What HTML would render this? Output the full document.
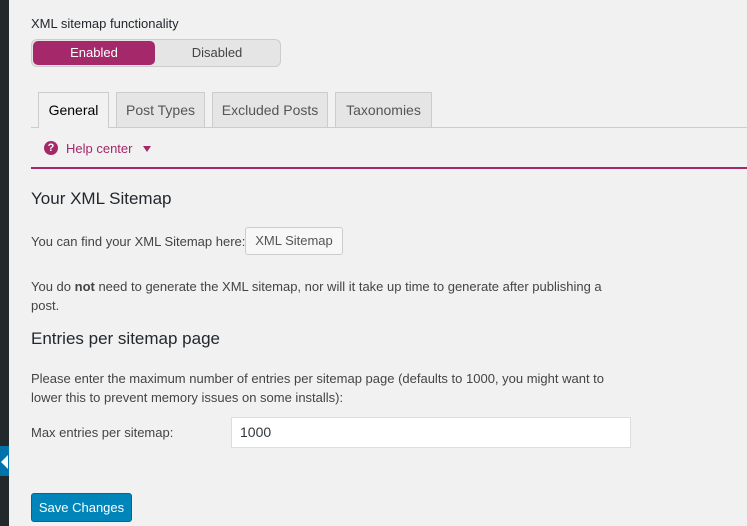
<!DOCTYPE html><html><head><style>
body{margin:0;width:747px;height:526px;background:#f1f1f1;font-family:"Liberation Sans",sans-serif;font-size:13px;color:#444;position:relative;overflow:hidden}
.a{position:absolute;white-space:nowrap}
.tab{position:absolute;top:92px;height:35px;box-sizing:border-box;border:1px solid #ccc;border-bottom:none;background:#e5e5e5;color:#555;font-size:14px;line-height:34px;text-align:center}
</style></head><body>
<div class="a" style="left:0;top:0;width:9px;height:526px;background:#23282d"></div>
<div class="a" style="left:0;top:446px;width:9px;height:30px;background:#0073aa"></div>
<div class="a" style="left:1px;top:455px;width:0;height:0;border-top:7px solid transparent;border-bottom:7px solid transparent;border-right:7px solid #fff"></div>
<div class="a" style="left:31px;top:16px;color:#23282d">XML sitemap functionality</div>
<div class="a" style="left:31px;top:39px;width:250px;height:28px;box-sizing:border-box;border:1px solid #ccc;border-radius:6px;background:#e5e5e5"></div>
<div class="a" style="left:33px;top:41px;width:122px;height:24px;background:#a4286a;border-radius:5px;color:#fff;text-align:center;line-height:24px">Enabled</div>
<div class="a" style="left:155px;top:41px;width:124px;height:24px;color:#444;text-align:center;line-height:24px">Disabled</div>
<div class="a" style="left:31px;top:127px;width:716px;border-top:1px solid #ccc"></div>
<div class="tab" style="left:38px;width:71px;background:#f1f1f1;height:36px;color:#000">General</div>
<div class="tab" style="left:116px;width:89px">Post Types</div>
<div class="tab" style="left:212px;width:116px">Excluded Posts</div>
<div class="tab" style="left:335px;width:97px">Taxonomies</div>
<div class="a" style="left:44px;top:141px;width:14px;height:14px;border-radius:50%;background:#a4286a;color:#fff;font-size:11px;font-weight:bold;text-align:center;line-height:14px">?</div>
<div class="a" style="left:66px;top:141px;color:#a4286a">Help center</div>
<div class="a" style="left:143px;top:146px;border-left:4px solid transparent;border-right:4px solid transparent;border-top:6px solid #a4286a"></div>
<div class="a" style="left:31px;top:167px;width:716px;border-top:2px solid #a4286a"></div>
<div class="a" style="left:31px;top:189px;font-size:17px;color:#23282d">Your XML Sitemap</div>
<div class="a" style="left:31px;top:234px">You can find your XML Sitemap here:</div>
<div class="a" style="left:245px;top:227px;width:98px;height:28px;box-sizing:border-box;border:1px solid #ccc;border-radius:3px;background:#f7f7f7;line-height:26px;text-align:center;color:#555">XML Sitemap</div>
<div class="a" style="left:31px;top:277px;line-height:19px;white-space:normal;width:590px">You do <b>not</b> need to generate the XML sitemap, nor will it take up time to generate after publishing a post.</div>
<div class="a" style="left:31px;top:329px;font-size:17px;color:#23282d">Entries per sitemap page</div>
<div class="a" style="left:31px;top:369px;line-height:19px;white-space:normal;width:600px">Please enter the maximum number of entries per sitemap page (defaults to 1000, you might want to lower this to prevent memory issues on some installs):</div>
<div class="a" style="left:31px;top:425px">Max entries per sitemap:</div>
<div class="a" style="left:231px;top:417px;width:400px;height:31px;box-sizing:border-box;border:1px solid #ddd;background:#fff;padding-left:8px;line-height:29px;font-size:14px;color:#32373c">1000</div>
<div class="a" style="left:31px;top:493px;width:101px;height:29px;box-sizing:border-box;background:#0085ba;border:1px solid #006799;border-radius:3px;color:#fff;text-align:center;line-height:27px">Save Changes</div>
</body></html>
